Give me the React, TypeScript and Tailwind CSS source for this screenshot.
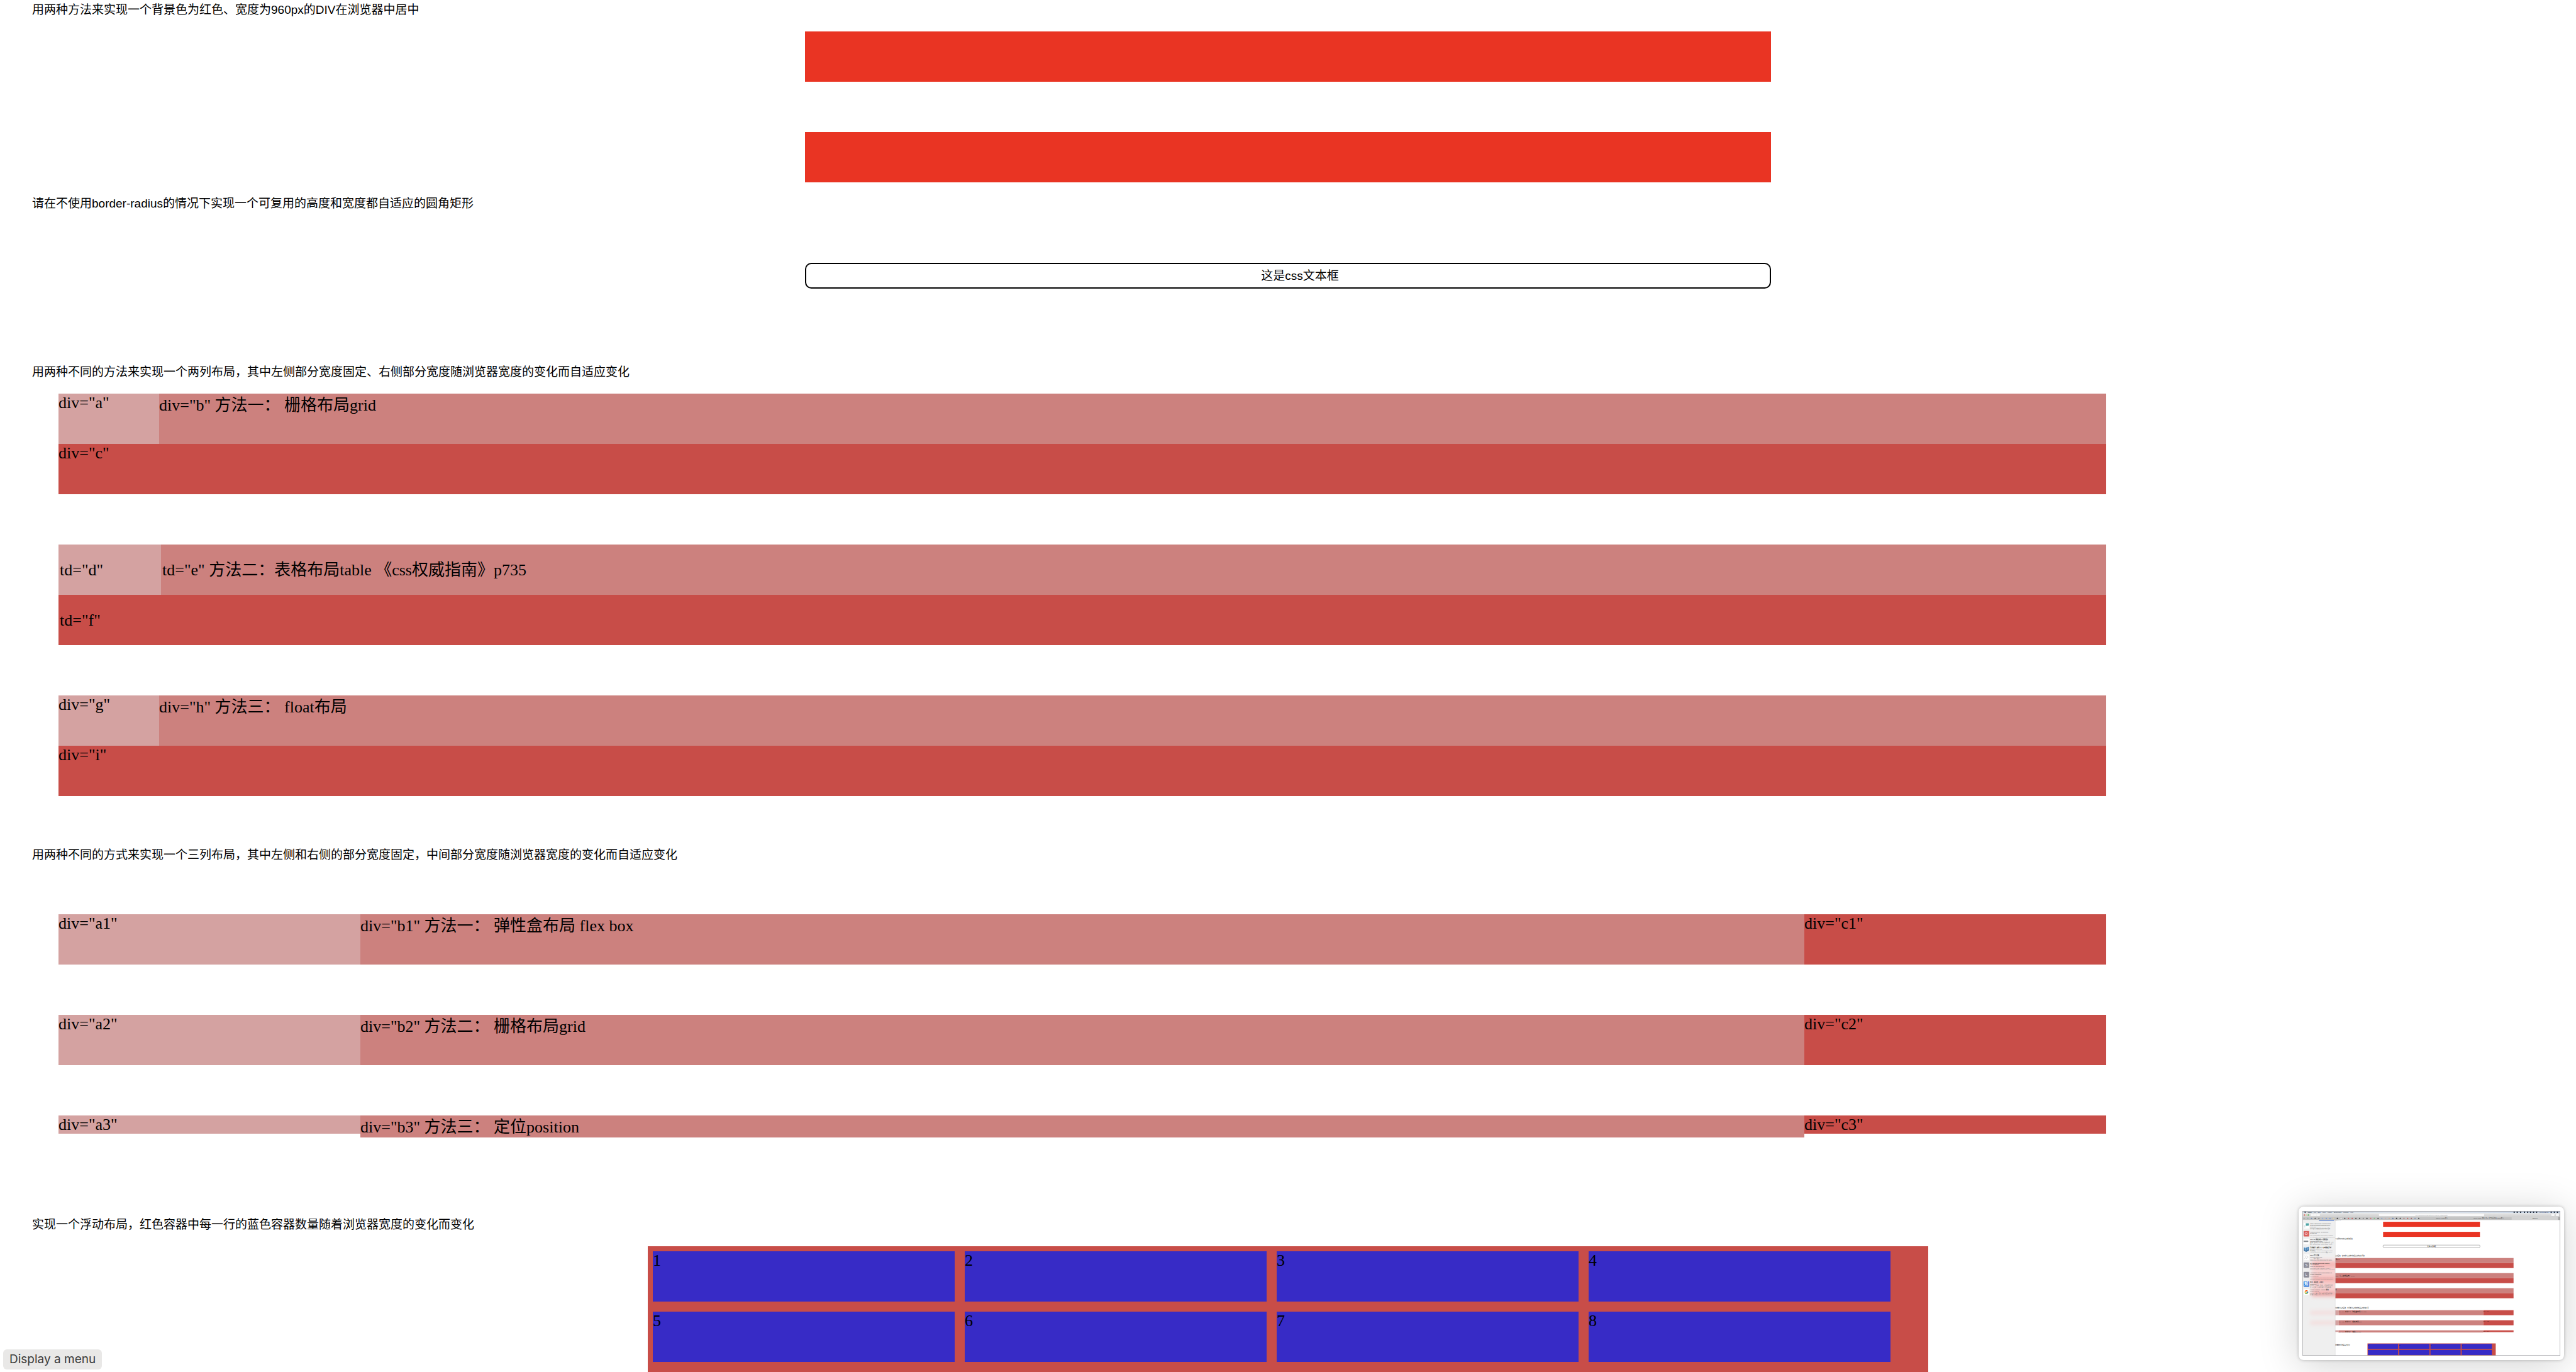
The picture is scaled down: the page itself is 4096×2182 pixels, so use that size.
import React from "react";
import { FcGoogle } from "react-icons/fc";

const SANS = "font-['Liberation_Sans','Noto_Sans_CJK_SC',sans-serif]";

function Title({ className, children }: { className: string; children: React.ReactNode }) {
  return <p className={`ml-[38px] text-[19px] leading-7 ${SANS} ${className}`}>{children}</p>;
}

function TwoColumns({ left, right, bottom }: { left: string; right: string; bottom: string }) {
  return (
    <div className="ml-20 grid w-4/5 grid-cols-[160px_1fr] grid-rows-[80px_80px]">
      <div className="bg-[#d4a2a1]">{left}</div>
      <div className="whitespace-pre bg-[#cc817e] pt-1">{right}</div>
      <div className="col-span-2 bg-[#c84d48]">{bottom}</div>
    </div>
  );
}

function ThreeColumns({ n, text }: { n: number; text: string }) {
  return (
    <div className="mt-20 ml-20 flex h-20 w-4/5">
      <div className="w-[480px] shrink-0 bg-[#d4a2a1]">{`div="a${n}"`}</div>
      <div className="min-w-0 flex-1 whitespace-pre bg-[#cc817e] pt-1">{`div="b${n}" ${text}`}</div>
      <div className="w-[480px] shrink-0 bg-[#c84d48]">{`div="c${n}"`}</div>
    </div>
  );
}

const bookmarks = [
  { y: 71, lines: ["https://www.zhihu.com/question/", "20757507/answer/259905975?u…"], rest: ["zhihu.com", "如何在每次都被别打扰时的对话的"] },
  { y: 118, lines: ["Popular Blocks - bl.ocks.org"], rest: ["bl.ocks.org", "Like visualization and creative coding?", "Try interactive JavaScript notebooks in O…"] },
  { y: 165, lines: ["D3.js (5) 数据绑定 & 创建图形"], rest: ["zhuanlan.zhihu.com", "本篇: 在学好了 如何用表现的时候, 上代", "码。d3.svg width=\"500\" height=\"500\"…"] },
  { y: 212, lines: ["可视教学 - 使用 D3.js 实现数据可视"], rest: ["zhuanlan.zhihu.com", "原文链接 - Learn to Create D3.js Data", "Visualizations by Example原于 D3.js…"] },
  { y: 259, lines: ["D3.js 学习之路"], rest: ["zhuanlan.zhihu.com", "D3.js 简介 通过 https://medium.com/", "dataviz/the-mid-fluent-guide-to-d3-ja…"] },
  { y: 306, lines: ["St Andrews University Library /", "All Locations"], rest: ["library.st-andrews.ac.uk", "University of St Andrews / Library /", "Opening Times / RSS Feeds / Your Librar…"] },
  { y: 362, lines: ["Advantages and Disadvantages of", "Cloud Computing"], rest: ["levelcloud.net", "Advantages of Cloud Computing Cost", "Savings Perhaps, the most significant…"] },
  { y: 419, lines: ["知乎 - 有问题，上知乎"], rest: ["zhihu.com", "有问题, 上知乎。知乎, 可信赖的问答社", "区, 以让每个人高效获得可信赖的解…"] },
  { y: 466, lines: ["Google scholar - Google 搜索"], rest: ["google.com.hk", "Google+ 搜索 图片 视频 地图 新闻 翻", "译 搜索工具 Google Scholar https://…"] },
];

const toolbarDots = [
  "#9a9a9a", "#7fb59b", "#5c7fb5", "#3b3b3b", "#666666", "#7fa6e6", "#5f8de0", "#5f8de0", "#e8d9a0", "#111111",
  "#ffffff", "#222222", "#c94343", "#c94343", "#333333", "#333333", "#777777", "#222222", "#d65555", "#69c074",
  "#222222", "#7d9bd1", "#cfa8a8", "#cfa08a", "#3e63a8", "#111111", "#222222", "#b06a6a", "#c94343", "#a05050",
  "#6b86b8", "#333333",
];

/* Floating preview of the browser window, one unit = about a quarter pixel. */
function Preview() {
  return (
    <svg
      viewBox="0 0 1534 862"
      preserveAspectRatio="none"
      className="block h-[230px] w-full"
      fontFamily="'Liberation Sans','Noto Sans CJK SC',sans-serif"
      role="img"
      aria-label="Preview"
    >
      <defs>
        <linearGradient id="menubar" x1="0" x2="1">
          <stop offset="0" stopColor="#d3dce6" />
          <stop offset="0.5" stopColor="#dde3ea" />
          <stop offset="1" stopColor="#c3d2e6" />
        </linearGradient>
        <linearGradient id="toolbar" x1="0" x2="0" y1="0" y2="1">
          <stop offset="0" stopColor="#e4e4e4" />
          <stop offset="1" stopColor="#d0d0d0" />
        </linearGradient>
        <filter id="glow" x="-20%" y="-30%" width="140%" height="160%">
          <feGaussianBlur stdDeviation="12" />
        </filter>
        <clipPath id="side">
          <rect x="0" y="54" width="195" height="808" />
        </clipPath>
      </defs>
      <rect width="1534" height="862" fill="#ffffff" />

      {/* page */}
      <rect x="480" y="64" width="576" height="30" fill="#e93423" />
      <rect x="480" y="124" width="576" height="30" fill="#e93423" />
      <rect x="480" y="203" width="576" height="14" rx="4" fill="none" stroke="#777777" strokeWidth="2" />
      <g fontSize="8" fill="#111111">
        <text x="768" y="213" textAnchor="middle">这是css文本框</text>
        <text x="195" y="57" fontSize="7">宽度为居中</text>
        <text x="195" y="169">可复用的高度和宽度都自适应</text>
        <text x="195" y="271">宽度固定、右侧部分宽度随浏览器宽度的变化而自</text>
        <text x="195" y="582">侧的部分宽度固定，中间部分宽度随浏览器宽度的变化而</text>
        <text x="195" y="803">数量随着浏览器宽度变化</text>
      </g>
      {[280, 370, 460].map((y) => (
        <g key={y}>
          <rect x="195" y={y} width="1061" height="30" fill="#cc817e" />
          <rect x="195" y={y + 30} width="1061" height="30" fill="#c84d48" />
        </g>
      ))}
      {[591, 651, 711].map((y) => (
        <g key={y}>
          <rect x="195" y={y} width="20" height={y === 711 ? 10 : 30} fill="#d4a2a1" />
          <rect x="215" y={y} width="861" height={y === 711 ? 13 : 30} fill="#cc817e" />
          <rect x="1076" y={y} width="180" height={y === 711 ? 11 : 30} fill="#c84d48" />
        </g>
      ))}
      <g fontSize="10" fill="#111111" fontFamily="'Liberation Serif','Noto Sans CJK SC',serif">
        <text x="197" y="291">局grid</text>
        <text x="195" y="389">table 《css权威指南》p735</text>
        <text x="195" y="471">局</text>
        <text x="215" y="602">div="b1" 方法一： 弹性盒布局 flex box</text>
        <text x="215" y="662">div="b2" 方法二： 栅格布局grid</text>
        <text x="215" y="722">div="b3" 方法三： 定位position</text>
        <text x="1076" y="600">div="c1"</text>
        <text x="1076" y="660">div="c2"</text>
        <text x="1076" y="720">div="c3"</text>
      </g>
      <rect x="387" y="789" width="763" height="73" fill="#c84d48" />
      {[390, 576, 762, 948].map((x, i) => (
        <g key={x}>
          <rect x={x} y="792" width="179" height="30" fill="#372bc6" />
          <rect x={x} y="828" width="179" height="30" fill="#372bc6" />
          <text x={x + 1} y="801" fontSize="9">{i + 1}</text>
          <text x={x + 1} y="837" fontSize="9">{i + 5}</text>
        </g>
      ))}

      {/* sidebar */}
      <g clipPath="url(#side)">
        <rect x="0" y="54" width="195" height="808" fill="#efefef" />
        <g filter="url(#glow)">
          <rect x="56" y="290" width="170" height="220" fill="#f7d2d1" />
          <rect x="56" y="306" width="170" height="26" fill="#f4b0ae" />
          <rect x="56" y="392" width="170" height="30" fill="#f4b0ae" />
          <rect x="56" y="480" width="170" height="26" fill="#f2a6a4" />
          <rect x="46" y="598" width="180" height="16" fill="#f5d6d5" />
          <rect x="46" y="658" width="180" height="16" fill="#f5d6d5" />
        </g>
        <rect x="98" y="50" width="91" height="9" fill="#2f62c9" />
        {bookmarks.map((b) => (
          <g key={b.y} fontSize="8">
            {b.lines.map((t, i) => (
              <text key={t} x="46" y={b.y + 8 + i * 10} fontWeight="bold" fill="#333333">{t}</text>
            ))}
            {b.rest.map((t, i) => (
              <text key={t} x="46" y={b.y + 8 + (i + b.lines.length) * 10} fill={i === 0 ? "#444444" : "#808080"}>{t}</text>
            ))}
          </g>
        ))}
        <rect x="7" y="71" width="33" height="33" rx="3" fill="#ffffff" />
        <path d="M20 73h18v14h-9l-4 4v-4h-5z" fill="#4fa3a5" />
        <path d="M10 84h7v14h-7z" fill="#d5e5ea" />
        <rect x="7" y="119" width="33" height="33" rx="3" fill="#d9605c" />
        <rect x="7" y="165" width="33" height="33" rx="3" fill="#ffffff" />
        <rect x="7" y="176" width="28" height="9" rx="2" fill="#8a8f94" />
        <rect x="7" y="212" width="33" height="33" rx="3" fill="#e6eef5" />
        <path d="M8 216l9 3v18l-9-4zM19 219l8-3v20l-8 5zM29 215l9-2v20l-9 5z" fill="#4c86b8" />
        <path d="M8 235l14 9 16-9v-6l-16 9-14-8z" fill="#2f6597" />
        <rect x="7" y="259" width="33" height="33" rx="3" fill="#ffffff" />
        <path d="M12 266l8 5 6-4 9 8M12 286l6-9 8 6 8-10" stroke="#b4b4b4" strokeWidth="2" fill="none" />
        <rect x="7" y="306" width="33" height="33" rx="3" fill="#8b8b97" />
        <rect x="7" y="363" width="33" height="33" rx="3" fill="#8b8b97" />
        <rect x="7" y="419" width="33" height="33" rx="3" fill="#2b74d9" />
        <rect x="7" y="466" width="33" height="33" rx="3" fill="#ffffff" />
        <FcGoogle x="11" y="470" width="25" height="25" />
        <g fill="#ffffff" textAnchor="middle" fontSize="22">
          <text x="23" y="143">O</text>
          <text x="23" y="331">S</text>
          <text x="23" y="387">L</text>
          <text x="23" y="444" fontSize="24" fontWeight="bold">知</text>
        </g>
      </g>
      <rect x="194" y="54" width="2" height="808" fill="#d2d2d2" />

      {/* browser chrome */}
      <rect width="1534" height="13" fill="url(#menubar)" />
      <rect y="13" width="1534" height="22" fill="url(#toolbar)" />
      <rect y="35" width="1534" height="18" fill="#c2c2c2" />
      <rect x="1245" y="35" width="275" height="18" fill="#d3d3d3" />
      <rect x="1521" y="35" width="13" height="18" fill="#a9a9a9" />
      <rect y="53" width="1534" height="2" fill="#e3e3e3" />
      <g fontSize="9" fill="#1f2937">
        <circle cx="16" cy="7" r="4" />
        <text x="32" y="10" fontWeight="bold">Safari</text>
        <text x="67" y="10">File</text>
        <text x="92" y="10">Edit</text>
        <text x="118" y="10">View</text>
        <text x="149" y="10">History</text>
        <text x="187" y="10">Bookmarks</text>
        <text x="242" y="10">Window</text>
        <text x="284" y="10">Help</text>
        <text x="1410" y="10">Wed 1:52 PM</text>
        {[1260, 1278, 1298, 1321, 1340, 1357, 1375, 1393, 1480, 1499, 1517].map((x) => (
          <rect key={x} x={x - 4} y="3" width="8" height="8" rx="3" />
        ))}
      </g>
      <circle cx="12" cy="24" r="4" fill="#e0605a" />
      <circle cx="23" cy="24" r="4" fill="#dccb9f" />
      <circle cx="35" cy="24" r="4" fill="#53b553" />
      {[49, 67, 86, 1481, 1508].map((x) => (
        <rect key={x} x={x} y="18" width="18" height="12" rx="2" fill="#f6f6f6" />
      ))}
      <rect x="456" y="17" width="625" height="13" rx="3" fill="#f8f8f8" />
      <g fontSize="8" fill="#444444" textAnchor="middle">
        <text x="768" y="27">file:///Users/huxpro/Desktop/file-1029/26-1/task02.html</text>
        <text x="829" y="46">2h2016- CSDN搜索</text>
        <text x="1106" y="46">#32016-task2_练格_线m_重于编写博客-CSDN搜索</text>
        <text x="1384" y="46" fill="#111111">task02-1</text>
      </g>
      {toolbarDots.map((c, i) => (
        <circle key={i} cx={10 + i * 22} cy="44" r="4" fill={c} fillOpacity="0.8" />
      ))}
      <rect x="1" y="1" width="1532" height="860" fill="none" stroke="#959599" strokeWidth="3" />
    </svg>
  );
}

export default function App() {
  return (
    <main className="relative flex min-h-screen flex-col overflow-hidden bg-white px-[13px] pt-0.5 font-['Liberation_Serif','Noto_Sans_CJK_SC',serif] text-[26px] leading-[29px] text-black">
      <Title className="">用两种方法来实现一个背景色为红色、宽度为960px的DIV在浏览器中居中</Title>
      <div className="mx-auto mt-5 h-20 w-[1536px] max-w-full bg-[#e93423]" />
      <div className="mx-auto mt-20 h-20 w-[1536px] max-w-full bg-[#e93423]" />

      <Title className="mt-5">请在不使用border-radius的情况下实现一个可复用的高度和宽度都自适应的圆角矩形</Title>
      <div className={`mx-auto mt-20 w-[1536px] max-w-full rounded-[10px] border-2 border-black py-1 pl-[38px] text-center text-[19px] ${SANS}`}>
        这是css文本框
      </div>

      <Title className="mt-[119px] mb-5">
        用两种不同的方法来实现一个两列布局，其中左侧部分宽度固定、右侧部分宽度随浏览器宽度的变化而自适应变化
      </Title>
      <TwoColumns left={'div="a"'} right={'div="b" 方法一： 栅格布局grid'} bottom={'div="c"'} />
      <table className="mt-20 ml-20 w-4/5 table-fixed border-collapse">
        <colgroup>
          <col className="w-[163px]" />
          <col />
        </colgroup>
        <tbody>
          <tr className="h-20">
            <td className="bg-[#d4a2a1] px-0.5 py-0">td="d"</td>
            <td className="whitespace-pre bg-[#cc817e] px-0.5 py-0">td="e" 方法二：表格布局table 《css权威指南》p735</td>
          </tr>
          <tr className="h-20">
            <td colSpan={2} className="bg-[#c84d48] px-0.5 py-0">td="f"</td>
          </tr>
        </tbody>
      </table>
      <div className="mt-20">
        <TwoColumns left={'div="g"'} right={'div="h" 方法三： float布局'} bottom={'div="i"'} />
      </div>

      <Title className="mt-20">
        用两种不同的方式来实现一个三列布局，其中左侧和右侧的部分宽度固定，中间部分宽度随浏览器宽度的变化而自适应变化
      </Title>
      <ThreeColumns n={1} text="方法一： 弹性盒布局 flex box" />
      <ThreeColumns n={2} text="方法二： 栅格布局grid" />
      <div className="mt-20 ml-20 flex w-4/5 items-start">
        <div className="w-[480px] shrink-0 bg-[#d4a2a1]">div="a3"</div>
        <div className="min-w-0 flex-1 whitespace-pre bg-[#cc817e] pt-1 pb-0.5">{'div="b3" 方法三： 定位position'}</div>
        <div className="w-[480px] shrink-0 bg-[#c84d48]">div="c3"</div>
      </div>

      <Title className="mt-[125px] mb-5">实现一个浮动布局，红色容器中每一行的蓝色容器数量随着浏览器宽度的变化而变化</Title>
      <div className="mx-auto flex w-[calc(50%+1px)] flex-1 flex-wrap content-start bg-[#c84d48] pb-2">
        {[1, 2, 3, 4, 5, 6, 7, 8].map((n) => (
          <div key={n} className="m-2 h-20 w-[480px] bg-[#372bc6]">{n}</div>
        ))}
      </div>

      <div className="absolute bottom-1 left-[5px] rounded-md bg-[#e9e8e7] px-[10px] font-['Inter',sans-serif] text-[19px] leading-8 text-[#3c3c3c]">
        Display a menu
      </div>
      <div className="absolute right-[19px] bottom-[19px] w-[422px] rounded-lg bg-white px-[6px] py-[7px] shadow-[0_0_5px_rgba(0,0,0,0.25),0_8px_64px_rgba(0,0,0,0.18)]">
        <Preview />
      </div>
    </main>
  );
}
